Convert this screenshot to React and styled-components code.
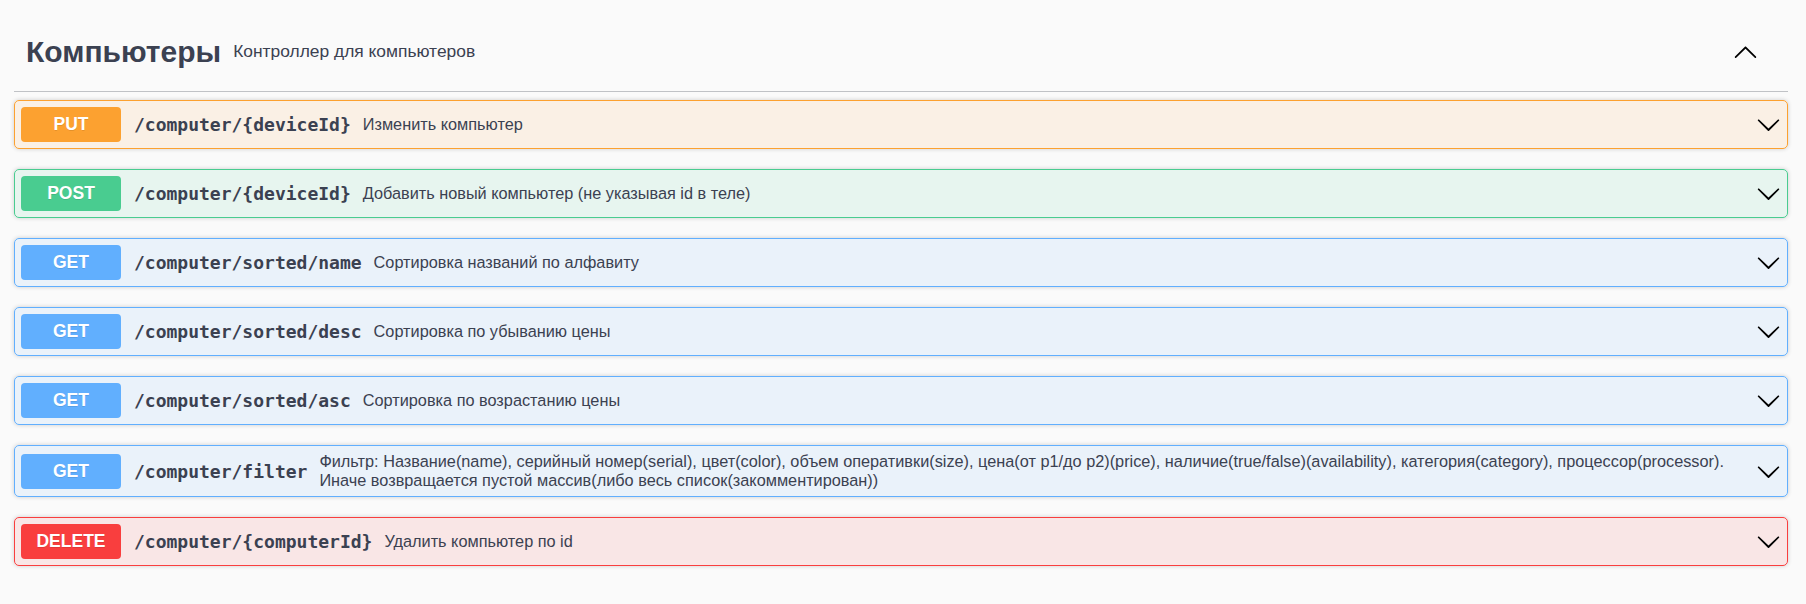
import React from "react";
import styled, { createGlobalStyle } from "styled-components";

const GlobalStyle = createGlobalStyle`
  html, body {
    margin: 0;
    padding: 0;
    background: #fafafa;
  }
  body {
    font-family: "Liberation Sans", Arial, sans-serif;
    color: #3b4151;
  }
`;

const METHODS = {
  put: { color: "#fca130", bg: "rgba(252, 161, 48, 0.1)" },
  post: { color: "#49cc90", bg: "rgba(73, 204, 144, 0.1)" },
  get: { color: "#61affe", bg: "rgba(97, 175, 254, 0.1)" },
  delete: { color: "#f93e3e", bg: "rgba(249, 62, 62, 0.1)" },
};

const operations = [
  { method: "put", path: "/computer/{deviceId}", summary: "Изменить компьютер" },
  {
    method: "post",
    path: "/computer/{deviceId}",
    summary: "Добавить новый компьютер (не указывая id в теле)",
  },
  { method: "get", path: "/computer/sorted/name", summary: "Сортировка названий по алфавиту" },
  { method: "get", path: "/computer/sorted/desc", summary: "Сортировка по убыванию цены" },
  { method: "get", path: "/computer/sorted/asc", summary: "Сортировка по возрастанию цены" },
  {
    method: "get",
    path: "/computer/filter",
    summary:
      "Фильтр: Название(name), серийный номер(serial), цвет(color), объем оперативки(size), цена(от p1/до p2)(price), наличие(true/false)(availability), категория(category), процессор(processor). Иначе возвращается пустой массив(либо весь список(закомментирован))",
  },
  { method: "delete", path: "/computer/{computerId}", summary: "Удалить компьютер по id" },
];

const Page = styled.div`
  padding: 12px 18px 20px 14px;
`;

const TagHeader = styled.div`
  display: flex;
  align-items: center;
  box-sizing: border-box;
  height: 80px;
  padding: 0 25px 0 12px;
  margin-bottom: 8px;
  border-bottom: 1px solid rgba(59, 65, 81, 0.3);
`;

const TagTitle = styled.h3`
  margin: 0;
  font-size: 30px;
  font-weight: 700;
  color: #3b4151;
`;

const TagDescription = styled.small`
  flex: 1;
  padding: 0 12px;
  font-size: 17.4px;
  color: #3b4151;
`;

const ToggleButton = styled.button`
  display: flex;
  align-items: center;
  border: none;
  background: none;
  padding: 0 5px 0 0;
  cursor: pointer;
`;

const OpBlock = styled.div`
  margin-bottom: 20px;
  border: 1px solid ${(p) => p.$color};
  border-radius: 5px;
  background: ${(p) => p.$bg};
  box-shadow: 0 0 4px rgba(0, 0, 0, 0.19);
`;

const Summary = styled.div`
  display: flex;
  align-items: center;
  padding: 6px;
  cursor: pointer;
`;

const MethodBadge = styled.span`
  flex-shrink: 0;
  box-sizing: border-box;
  min-width: 100px;
  padding: 7px 0;
  border-radius: 4px;
  background: ${(p) => p.$color};
  color: #fff;
  font-size: 17.5px;
  font-weight: 700;
  line-height: 21px;
  text-align: center;
  text-shadow: 0 1px 0 rgba(0, 0, 0, 0.1);
`;

const PathText = styled.span`
  flex-shrink: 0;
  padding: 0 12px 0 13px;
  font-family: "DejaVu Sans Mono", "Liberation Mono", monospace;
  font-size: 18px;
  font-weight: 700;
  color: #3b4151;
`;

const SummaryDescription = styled.div`
  flex: 1;
  font-size: 16.3px;
  color: #3b4151;
`;

const ArrowIcon = styled.svg`
  flex-shrink: 0;
  width: 25px;
  height: 25px;
  fill: #000;
`;

const ArrowDown = () => (
  <ArrowIcon viewBox="0 0 20 20">
    <path d="M17.418 6.109c.272-.268.709-.268.979 0s.271.701 0 .969l-7.908 7.83c-.27.268-.707.268-.979 0l-7.908-7.83c-.27-.268-.27-.701 0-.969.271-.268.709-.268.979 0L10 13.25l7.418-7.141z" />
  </ArrowIcon>
);

const ArrowUp = () => (
  <ArrowIcon viewBox="0 0 20 20">
    <path d="M17.418 14.908c.272.268.709.268.979 0s.271-.701 0-.969l-7.908-7.83c-.27-.268-.707-.268-.979 0l-7.908 7.83c-.27.268-.27.701 0 .969.271.268.709.268.979 0L10 7.767l7.418 7.141z" />
  </ArrowIcon>
);

const Operation = ({ op }) => {
  const m = METHODS[op.method];
  return (
    <OpBlock $color={m.color} $bg={m.bg}>
      <Summary>
        <MethodBadge $color={m.color}>{op.method.toUpperCase()}</MethodBadge>
        <PathText>{op.path}</PathText>
        <SummaryDescription>{op.summary}</SummaryDescription>
        <ArrowDown />
      </Summary>
    </OpBlock>
  );
};

export default function App() {
  return (
    <>
      <GlobalStyle />
      <Page>
        <TagHeader>
          <TagTitle>Компьютеры</TagTitle>
          <TagDescription>Контроллер для компьютеров</TagDescription>
          <ToggleButton>
            <ArrowUp />
          </ToggleButton>
        </TagHeader>
        {operations.map((op, i) => (
          <Operation key={i} op={op} />
        ))}
      </Page>
    </>
  );
}
